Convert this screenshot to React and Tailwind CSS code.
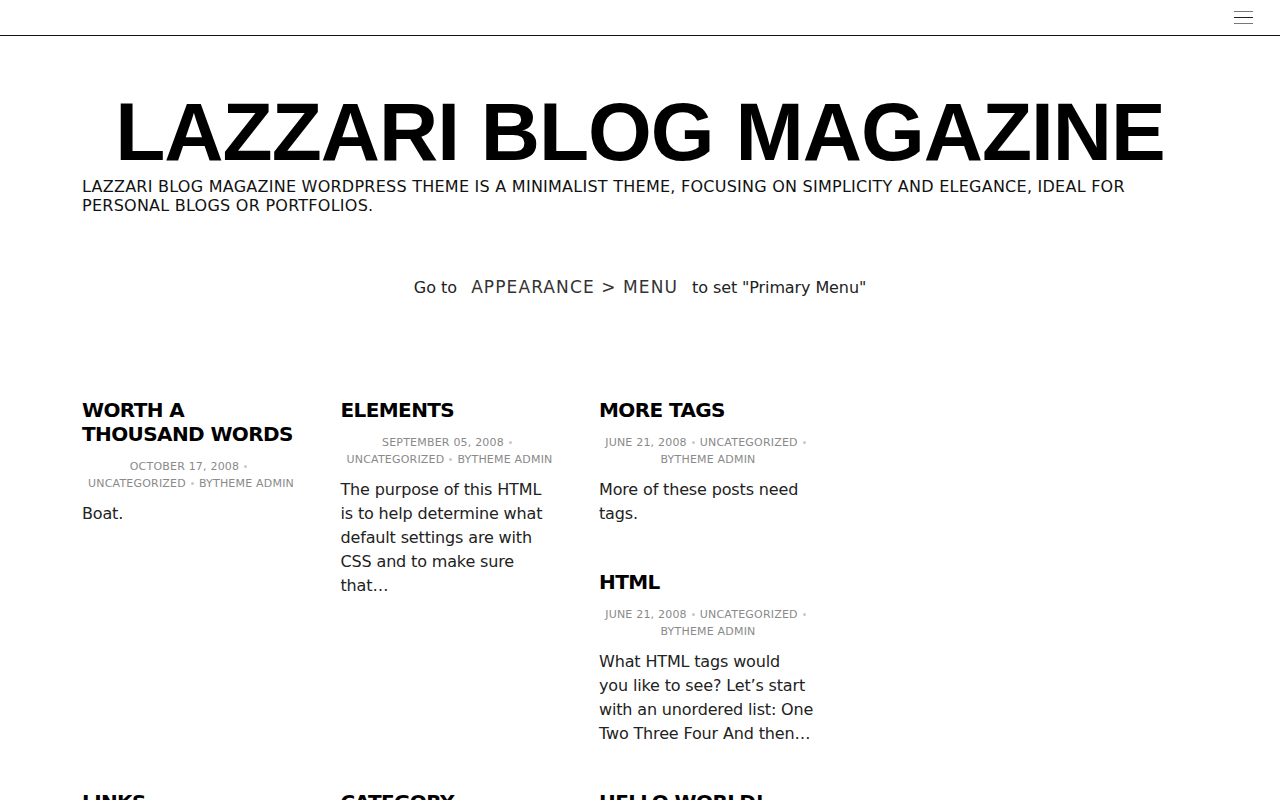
import React from 'react';

const posts = {
  worth: {
    title: 'Worth a Thousand Words',
    date: 'October 17, 2008',
    excerpt: 'Boat.',
  },
  elements: {
    title: 'Elements',
    date: 'September 05, 2008',
    excerpt: 'The purpose of this HTML is to help determine what default settings are with CSS and to make sure that…',
  },
  moreTags: {
    title: 'More Tags',
    date: 'June 21, 2008',
    excerpt: 'More of these posts need tags.',
  },
  html: {
    title: 'HTML',
    date: 'June 21, 2008',
    excerpt: (
      <>
        What HTML tags would
        <br />
        you like to see? Let’s start with an unordered list: One Two Three Four And then…
      </>
    ),
  },
  links: { title: 'Links', date: 'June 21, 2008', excerpt: '' },
  category: { title: 'Category', date: 'June 21, 2008', excerpt: '' },
  hello: { title: 'Hello world!', date: 'June 21, 2008', excerpt: '' },
};

const Dot = () => (
  <span className="mx-[5px] inline-block h-[3px] w-[3px] rounded-full bg-[#c8c8c8] align-middle" />
);

const Post = ({ post }) => (
  <article className="mb-[44px]">
    <h2 className="text-[20px] font-bold uppercase leading-[24px] tracking-[-0.6px] text-black">
      {post.title}
    </h2>
    <div className="mt-[12px] text-center text-[11px] uppercase leading-[17px] tracking-[0.2px] text-[#8a8a8a]">
      <span className="whitespace-nowrap">{post.date}<Dot /></span>
      <span className="whitespace-nowrap">Uncategorized<Dot /></span>
      <span className="whitespace-nowrap">ByTheme Admin</span>
    </div>
    {post.excerpt && (
      <p className="mt-[10px] text-[16px] leading-[24px] tracking-[-0.15px] text-[#222]">{post.excerpt}</p>
    )}
  </article>
);

export default function App() {
  return (
    <div className="min-h-screen bg-white font-['DejaVu_Sans',sans-serif] text-[#222]">
      {/* top bar */}
      <header className="flex h-[36px] items-center justify-end border-b border-[#111] pr-[27px]">
        <button className="flex w-[19px] flex-col gap-[5px]">
          <span className="h-[1px] w-full bg-[#777]" />
          <span className="h-[1px] w-full bg-[#222]" />
          <span className="h-[1px] w-full bg-[#777]" />
        </button>
      </header>

      <div className="mx-auto w-[1116px]">
        {/* branding */}
        <div className="pt-[48px] text-center">
          <h1 className="font-['Liberation_Sans',sans-serif] text-[82px] font-bold uppercase leading-[96px] tracking-[-1px] text-black">
            Lazzari Blog Magazine
          </h1>
        </div>
        <p className="mt-[-3px] text-[16px] uppercase leading-[19px] tracking-[0.25px] text-[#111]">
          Lazzari Blog Magazine WordPress theme is a minimalist theme, focusing on simplicity and elegance, ideal for personal blogs or portfolios.
        </p>

        {/* menu notice */}
        <div className="mt-[60px] flex items-center justify-center text-[16px] text-[#222]">
          <span className="tracking-[0px]">Go to</span>
          <span className="mx-[14px] text-[17px] uppercase tracking-[1.1px] text-[#333]">Appearance &gt; Menu</span>
          <span className="tracking-[-0.1px]">to set "Primary Menu"</span>
        </div>

        {/* posts */}
        <main className="mt-[97px] grid grid-cols-[repeat(4,218px)] gap-x-[40.5px]">
          <div><Post post={posts.worth} /></div>
          <div><Post post={posts.elements} /></div>
          <div>
            <Post post={posts.moreTags} />
            <Post post={posts.html} />
          </div>
          <div />
          <div><Post post={posts.links} /></div>
          <div><Post post={posts.category} /></div>
          <div><Post post={posts.hello} /></div>
          <div />
        </main>
      </div>
    </div>
  );
}
